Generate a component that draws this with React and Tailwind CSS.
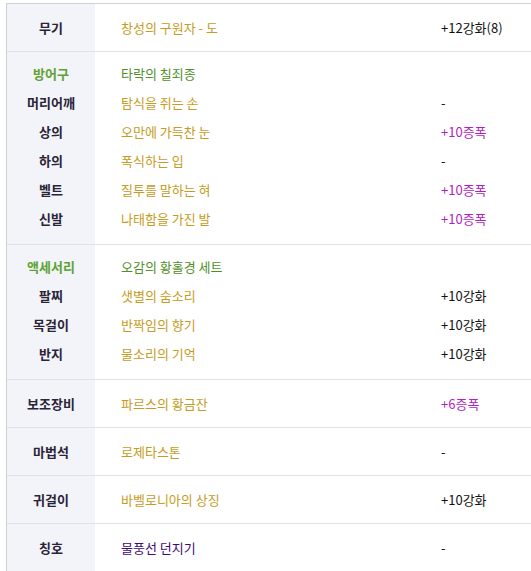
import React from 'react';

const GOLD = 'text-[#c59c22]';
const GREEN = 'text-[#4f8f2a]';
const PURPLE = 'text-[#b01fbf]';
const BLACK = 'text-[#111]';

const sections = [
  { rows: [{ label: '무기', item: '창성의 구원자 - 도', itemCls: GOLD, val: '+12강화(8)', valCls: BLACK }] },
  {
    rows: [
      { label: '방어구', labelGreen: true, item: '타락의 칠죄종', itemCls: GREEN, val: '', valCls: BLACK },
      { label: '머리어깨', item: '탐식을 쥐는 손', itemCls: GOLD, val: '-', valCls: BLACK },
      { label: '상의', item: '오만에 가득찬 눈', itemCls: GOLD, val: '+10증폭', valCls: PURPLE },
      { label: '하의', item: '폭식하는 입', itemCls: GOLD, val: '-', valCls: BLACK },
      { label: '벨트', item: '질투를 말하는 혀', itemCls: GOLD, val: '+10증폭', valCls: PURPLE },
      { label: '신발', item: '나태함을 가진 발', itemCls: GOLD, val: '+10증폭', valCls: PURPLE },
    ],
  },
  {
    rows: [
      { label: '액세서리', labelGreen: true, item: '오감의 황홀경 세트', itemCls: GREEN, val: '', valCls: BLACK },
      { label: '팔찌', item: '샛별의 숨소리', itemCls: GOLD, val: '+10강화', valCls: BLACK },
      { label: '목걸이', item: '반짝임의 향기', itemCls: GOLD, val: '+10강화', valCls: BLACK },
      { label: '반지', item: '물소리의 기억', itemCls: GOLD, val: '+10강화', valCls: BLACK },
    ],
  },
  { rows: [{ label: '보조장비', item: '파르스의 황금잔', itemCls: GOLD, val: '+6증폭', valCls: PURPLE }] },
  { rows: [{ label: '마법석', item: '로제타스톤', itemCls: GOLD, val: '-', valCls: BLACK }] },
  { rows: [{ label: '귀걸이', item: '바벨로니아의 상징', itemCls: GOLD, val: '+10강화', valCls: BLACK }] },
  { rows: [{ label: '칭호', item: '물풍선 던지기', itemCls: 'text-[#3d0a7a]', val: '-', valCls: BLACK }] },
];

const Section = ({ rows, last }) => {
  const multi = rows.length > 1;
  return (
    <div className={`flex ${last ? '' : 'border-b border-[#e2e2e6]'}`}>
      <div className={`w-[88px] shrink-0 bg-[#f3f4f9] ${multi ? 'pt-[7px] pb-[11px]' : 'py-[9px]'}`}>
        {rows.map((r) => (
          <div
            key={r.label}
            className={`h-[29px] flex items-center justify-center font-bold ${r.labelGreen ? 'text-[#5ea332]' : 'text-[#2a2438]'}`}
          >
            {r.label}
          </div>
        ))}
      </div>
      <div className={`flex-1 ${multi ? 'pt-[7px] pb-[11px]' : 'py-[9px]'}`}>
        {rows.map((r) => (
          <div key={r.label} className="h-[29px] flex items-center">
            <span className={`w-[346px] pl-[26px] ${r.itemCls}`}>{r.item}</span>
            <span className={r.valCls}>{r.val}</span>
          </div>
        ))}
      </div>
    </div>
  );
};

export default function App() {
  return (
    <div className="bg-white h-[571px] overflow-hidden pt-[3px] pl-[6px] text-[13px] leading-[18px] font-['Malgun_Gothic','Noto_Sans_CJK_KR',sans-serif]">
      <div className="border-t border-l border-[#cfcfd6]">
        {sections.map((s, i) => (
          <Section key={i} rows={s.rows} last={i === sections.length - 1} />
        ))}
      </div>
    </div>
  );
}
